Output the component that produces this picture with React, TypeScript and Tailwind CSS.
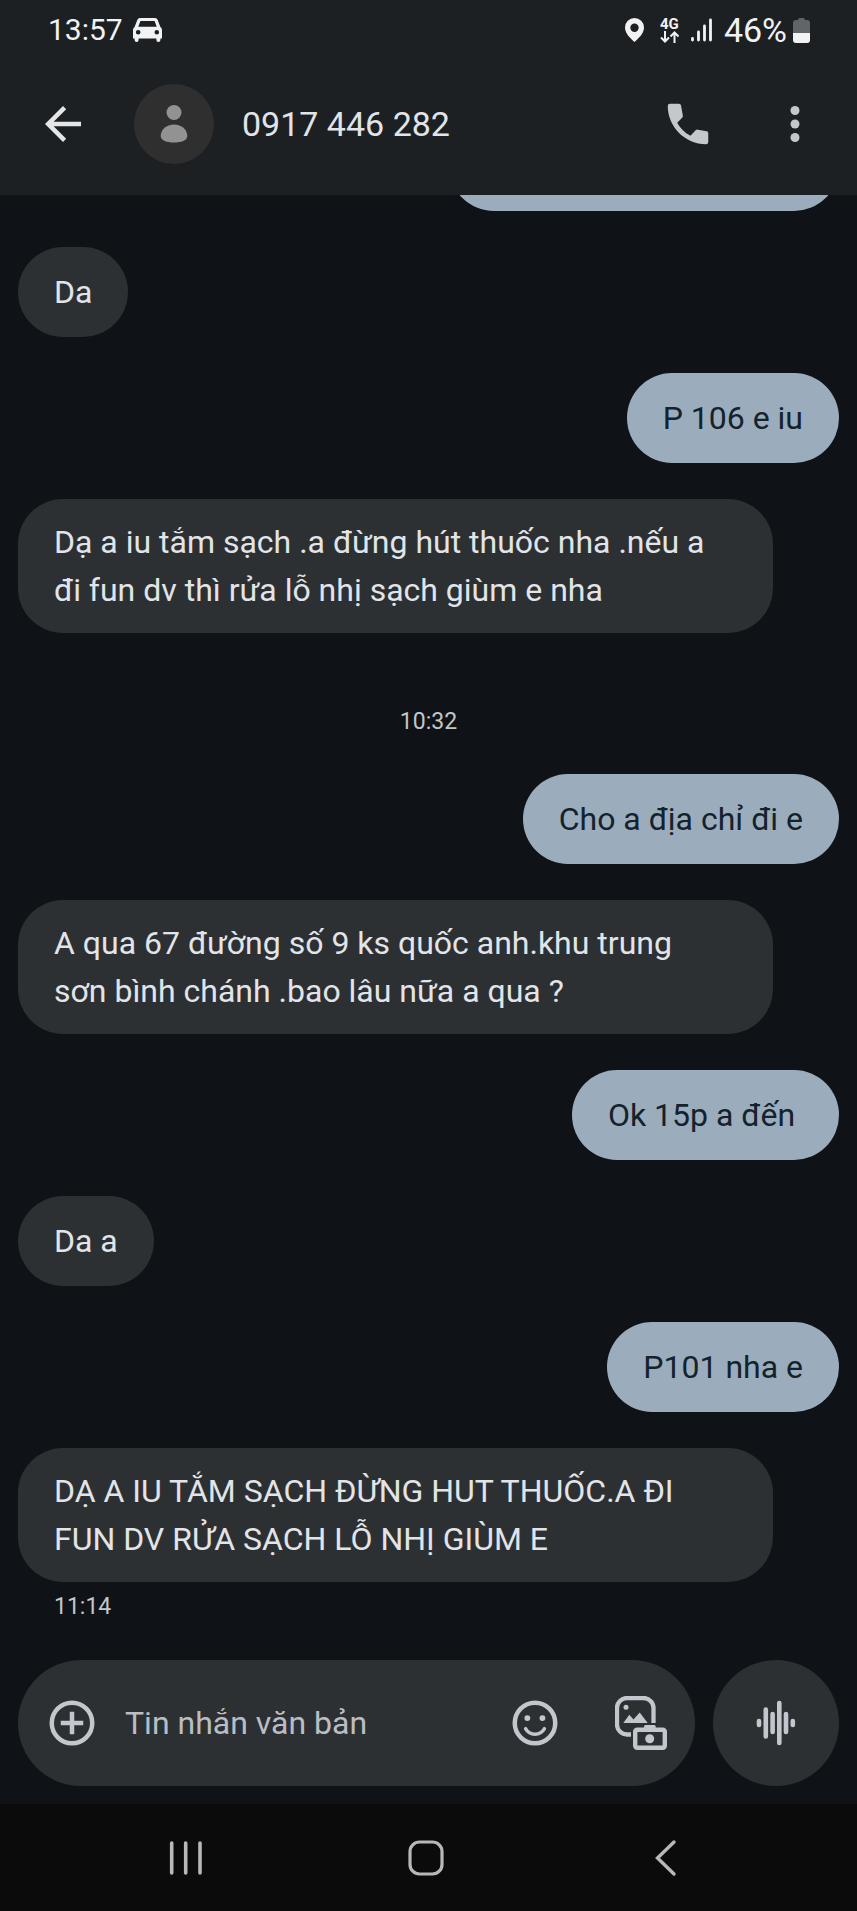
import React, { useState } from "react";

type Message = {
  from: "me" | "them";
  text: string;
};

type Group = {
  time?: string;
  messages: Message[];
};

const GROUPS: Group[] = [
  {
    messages: [
      { from: "them", text: "Da" },
      { from: "me", text: "P 106 e iu" },
      {
        from: "them",
        text: "Dạ a iu tắm sạch .a đừng hút thuốc nha .nếu a\nđi fun dv thì rửa lỗ nhị sạch giùm e nha",
      },
    ],
  },
  {
    time: "10:32",
    messages: [
      { from: "me", text: "Cho a địa chỉ đi e" },
      {
        from: "them",
        text: "A qua 67 đường số 9 ks quốc anh.khu trung\nsơn bình chánh .bao lâu nữa a qua ?",
      },
      { from: "me", text: "Ok 15p a đến " },
      { from: "them", text: "Da a" },
      { from: "me", text: "P101 nha e" },
      {
        from: "them",
        text: "DẠ A IU TẮM SẠCH ĐỪNG HUT THUỐC.A ĐI\nFUN DV RỬA SẠCH LỖ NHỊ GIÙM E",
      },
    ],
  },
];

function StatusBar() {
  return (
    <div className="flex h-[60px] items-center justify-between pl-12 pr-[47px] text-[#f1f2f3]">
      <div className="flex items-center gap-[10px]">
        <span className="text-[30px] leading-10">13:57</span>
        <svg className="h-6 w-[29px]" viewBox="0 0 29 24" fill="currentColor" aria-hidden="true">
          <path
            fillRule="evenodd"
            d="M7 0h15q2 0 2.6 1.8L27.4 9q1.6 1 1.6 3v8.500h-1.600V22a2 2 0 0 1-4 0v-1.500H5.600V22a2 2 0 0 1-4 0v-1.500H0V12q0-2 1.600-3L4.400 1.800Q5 0 7 0ZM7.400 3 5.300 8.700h18.400L21.600 3ZM5.200 12a2.300 2.300 0 1 0 0 4.600 2.300 2.300 0 0 0 0-4.600Zm18.600 0a2.300 2.300 0 1 0 0 4.600 2.300 2.300 0 0 0 0-4.600Z"
          />
        </svg>
      </div>
      <div className="flex items-center">
        <svg className="mr-4 h-6 w-[19px]" viewBox="0 0 19 24" fill="currentColor" aria-hidden="true">
          <path
            fillRule="evenodd"
            d="M9.500 0A9.500 9.500 0 0 0 0 9.500C0 16 6 20.500 9.500 24 13 20.500 19 16 19 9.500A9.500 9.500 0 0 0 9.500 0Zm0 5.500a4.200 4.200 0 1 1 0 8.400 4.200 4.200 0 0 1 0-8.400Z"
          />
        </svg>
        <div className="mr-3 flex flex-col items-center">
          <span className="text-[15px] font-bold leading-[14px]">4G</span>
          <svg className="h-3 w-[19px]" viewBox="0 0 19 12" fill="none" stroke="currentColor" strokeWidth="2" aria-hidden="true">
            <path d="M5 0v10.500M1 6.500l4 4 4-4M14.500 12V1.500M10.500 5.500l4-4 4 4" />
          </svg>
        </div>
        <svg className="mr-3 h-6 w-[21px]" viewBox="0 0 21 24" stroke="currentColor" strokeWidth="2.800" strokeLinecap="round" aria-hidden="true">
          <path d="M1.500 20.500v1.500M7.500 14v8M13.500 8v14M19.500 2v20" />
        </svg>
        <span className="text-[34px] leading-10">46%</span>
        <svg className="ml-[6px] h-[25px] w-[17px]" viewBox="0 0 17 25" aria-hidden="true">
          <path d="M5 2q0-2 2-2h3q2 0 2 2h2q3 0 3 3v11H0V5q0-3 3-3Z" fill="#626567" />
          <path d="M0 15h17v7q0 3-3 3H3q-3 0-3-3Z" fill="#f1f2f3" />
        </svg>
      </div>
    </div>
  );
}

function Header() {
  return (
    <header className="bg-[#1c2023] pb-2">
      <StatusBar />
      <div className="flex h-[127px] items-center pl-9 pr-[35px]">
        <button type="button" aria-label="Quay lại" className="text-[#e4e6e8]">
          <svg className="size-[54px]" viewBox="0 0 24 24" fill="currentColor">
            <path d="M20 11H7.830l5.590-5.590L12 4l-8 8 8 8 1.410-1.410L7.830 13H20z" />
          </svg>
        </button>
        <div className="ml-11 flex size-20 items-center justify-center rounded-full bg-[#2f2f2f]">
          <svg className="h-[38px] w-7" viewBox="0 0 28 38" fill="#929292" aria-hidden="true">
            <circle cx="14" cy="7.500" r="7.500" />
            <path d="M14 19.500c7.500 0 13.300 5 13.300 11.500 0 4.500-6 6.500-13.300 6.500S.7 35.500.7 31C.7 24.500 6.500 19.500 14 19.500Z" />
          </svg>
        </div>
        <h1 className="ml-7 flex-1 text-[34px] leading-10 text-[#e1e4e8]">0917 446 282</h1>
        <button type="button" aria-label="Gọi" className="text-[#c3c8cd]">
          <svg className="size-[54px]" viewBox="0 0 24 24" fill="currentColor">
            <path d="M3 4q0-1 1-1h4q.8 0 .9.8l.8 4.400q.1.6-.3 1l-2.200 2.200c1.200 2.400 3.300 4.400 5.900 5.800l2.300-2.400q.4-.4 1-.3l3.900.7q.7.1.7.9V20q0 1-1 1C10.800 21 3 13.200 3 4Z" />
          </svg>
        </button>
        <button type="button" aria-label="Tùy chọn khác" className="ml-[53px] text-[#c3c8cd]">
          <svg className="size-[54px]" viewBox="0 0 24 24" fill="currentColor">
            <circle cx="12" cy="6" r="2" />
            <circle cx="12" cy="12" r="2" />
            <circle cx="12" cy="18" r="2" />
          </svg>
        </button>
      </div>
    </header>
  );
}

function Bubble({ from, text }: Message) {
  const mine = from === "me";
  return (
    <div className={mine ? "flex justify-end" : "flex justify-start"}>
      <p
        className={
          mine
            ? "min-h-[90px] max-w-[92%] whitespace-pre-wrap rounded-[45px] bg-[#9badbc] px-9 py-[21px] text-[32px] leading-[48px] text-[#14222c]"
            : text.includes("\n")
              ? "w-[92%] whitespace-pre-wrap rounded-[45px] bg-[#2d3033] px-9 py-[19px] text-[32px] leading-[48px] text-[#e1e4e8]"
              : "min-h-[90px] max-w-[92%] whitespace-pre-wrap rounded-[45px] bg-[#2d3033] px-9 py-[21px] text-[32px] leading-[48px] text-[#e1e4e8]"
        }
      >
        {text}
      </p>
    </div>
  );
}

function Composer() {
  const [value, setValue] = useState("");

  return (
    <form className="flex gap-[18px] px-[18px] pb-[18px]" onSubmit={(e) => e.preventDefault()}>
      <div className="flex h-[126px] min-w-0 flex-1 items-center rounded-full bg-[#2d3033] pl-[27px] pr-7 text-[#c3c7cd]">
        <button type="button" aria-label="Thêm">
          <svg className="size-[54px]" viewBox="0 0 24 24" fill="none" stroke="currentColor" strokeWidth="2">
            <circle cx="12" cy="12" r="9" />
            <path d="M12 7v10M7 12h10" />
          </svg>
        </button>
        <input
          type="text"
          aria-label="Tin nhắn văn bản"
          placeholder="Tin nhắn văn bản"
          value={value}
          onChange={(e) => setValue(e.target.value)}
          className="ml-[26px] min-w-0 flex-1 bg-transparent text-[32px] leading-10 outline-none placeholder:text-[#b9bec4]"
        />
        <button type="button" aria-label="Biểu tượng cảm xúc">
          <svg className="size-[54px]" viewBox="0 0 24 24" fill="none" stroke="currentColor" strokeWidth="2">
            <circle cx="12" cy="12" r="9" />
            <circle cx="8.600" cy="9.800" r="1.300" fill="currentColor" stroke="none" />
            <circle cx="15.300" cy="9.800" r="1.300" fill="currentColor" stroke="none" />
            <path d="M7.800 14.500Q9.200 17 12 17t4.200-2.500" strokeWidth="1.500" strokeLinecap="round" />
          </svg>
        </button>
        <button type="button" aria-label="Thư viện và máy ảnh" className="ml-[53px]">
          <svg className="h-[54px] w-[52px]" viewBox="0 0 52 54" fill="currentColor">
            <path
              d="M38.500 27V12a10 10 0 0 0-10-10H12A10 10 0 0 0 2 12v16.500a10 10 0 0 0 10 10h4"
              fill="none"
              stroke="currentColor"
              strokeWidth="4.300"
            />
            <circle cx="11" cy="11.300" r="2.500" />
            <path d="m8.300 27 6-8.300 4.200 4.800 6.200-7L32.700 27Z" />
            <rect x="20.200" y="33.800" width="29.600" height="18" rx="2" fill="none" stroke="currentColor" strokeWidth="4.400" />
            <path d="M29 34v-3.500q0-1.500 1.500-1.500h8.700q1.500 0 1.500 1.500V34Z" />
            <circle cx="34.700" cy="42.700" r="4.500" />
          </svg>
        </button>
      </div>
      <button
        type="button"
        aria-label="Ghi âm"
        className="flex size-[126px] shrink-0 items-center justify-center rounded-full bg-[#2d3033] text-[#c3c7cd]"
      >
        <svg className="h-[46px] w-10" viewBox="0 0 40 46" stroke="currentColor" strokeWidth="4.600" strokeLinecap="round">
          <path d="M3 21v4M9.800 9.500v27M16.600 14v18M23.300 3v40M30 14v18M36.800 21v4" />
        </svg>
      </button>
    </form>
  );
}

function NavBar() {
  return (
    <nav className="flex h-[107px] items-center justify-between bg-[#0b0b0b] pl-[159px] pr-[164px] text-[#b8b8b8]">
      <button type="button" aria-label="Gần đây">
        <svg className="size-[54px]" viewBox="0 0 54 54" stroke="currentColor" strokeWidth="3.600" strokeLinecap="round">
          <path d="M12.700 12v30M26.700 12v30M41 12v30" />
        </svg>
      </button>
      <button type="button" aria-label="Màn hình chính">
        <svg className="size-[54px]" viewBox="0 0 54 54" fill="none" stroke="currentColor" strokeWidth="3.200">
          <rect x="11" y="11" width="32" height="32" rx="9.500" />
        </svg>
      </button>
      <button type="button" aria-label="Trở về">
        <svg className="size-[54px]" viewBox="0 0 54 54" fill="none" stroke="currentColor" strokeWidth="3.400" strokeLinecap="round">
          <path d="M35 11 18.500 27 35 43" />
        </svg>
      </button>
    </nav>
  );
}

export default function App() {
  return (
    <div className="flex min-h-screen flex-col bg-[#0f1317] font-[Roboto,sans-serif]">
      <Header />
      <main className="flex-1 px-[18px]">
        {/* tail of the message scrolled under the header */}
        <div className="flex h-4 items-end justify-end overflow-hidden">
          <div className="h-[90px] w-[390px] shrink-0 rounded-[45px] bg-[#9badbc]" />
        </div>
        {GROUPS.map((group, idx) => (
          <section key={idx}>
            {group.time ? (
              <time className="block pb-9 pt-[73px] text-center text-[23px] leading-8 text-[#c3c6ca]">{group.time}</time>
            ) : null}
            <div className={group.time ? "flex flex-col gap-9" : "mt-9 flex flex-col gap-9"}>
              {group.messages.map((message) => (
                <Bubble key={message.text} {...message} />
              ))}
            </div>
          </section>
        ))}
        <time className="mb-8 ml-9 mt-[9px] block text-[23px] leading-8 text-[#c3c6ca]">11:14</time>
      </main>
      <Composer />
      <NavBar />
    </div>
  );
}
